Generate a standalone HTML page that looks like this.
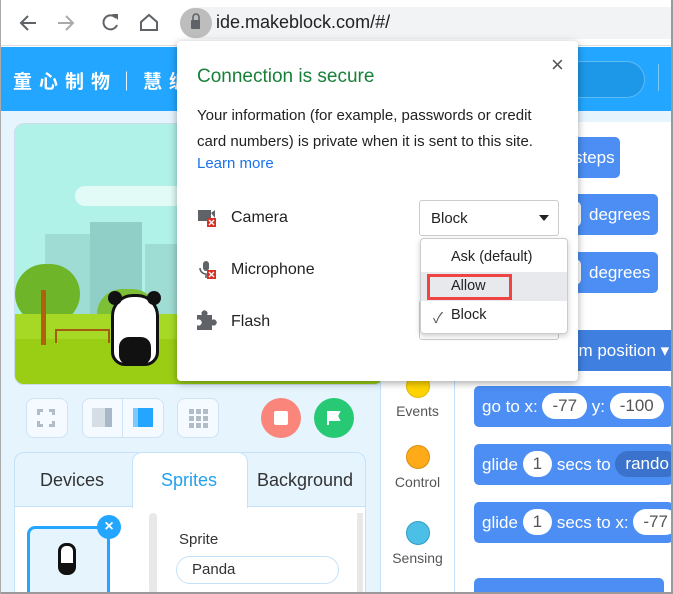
<!DOCTYPE html>
<html style="overflow:hidden;width:673px;height:594px"><head><meta charset="utf-8"><style>
*{margin:0;padding:0;box-sizing:border-box}
body{width:673px;height:594px;overflow:hidden;position:relative;background:#fff;font-family:"Liberation Sans","Noto Sans CJK SC",sans-serif;}
.a{position:absolute}
.blk{position:absolute;background:#4c8ef3;border-radius:5px;color:#fff;font-size:17px;height:41px;line-height:41px;padding-left:8px;white-space:nowrap;overflow:hidden}
.pill{display:inline-block;background:#fff;color:#555;border-radius:14px;height:26px;line-height:26px;padding:0 10px;vertical-align:middle;margin-top:-3px}
.cat{position:absolute;left:380px;width:75px;text-align:center;font-size:14px;color:#555}
.dot{width:24px;height:24px;border-radius:50%;margin:0 auto 5px}
</style></head><body>
<!-- toolbar -->
<div class="a" style="left:0;top:0;width:673px;height:46px;background:#fff;border-bottom:1px solid #ddd"></div>
<div class="a" style="left:180px;top:7px;width:493px;height:32px;background:#f1f3f4;border-radius:16px 0 0 16px"></div>
<div class="a" style="left:180px;top:8px;width:32px;height:30px;border-radius:15px;background:#bdbdbd"></div>
<svg class="a" style="left:0;top:0" width="200" height="46">
<g stroke="#5f6368" stroke-width="2" fill="none"><path d="M36 23H21M28 16l-7 7 7 7"/><path d="M58 23h15M66 16l7 7-7 7" stroke="#aaa"/><path d="M116 18a7 7 0 1 0 1 7"/><path d="M141 22l8-7 8 7v8h-16z"/></g>
<path d="M112 14h6v6z" fill="#5f6368"/>
<rect x="191" y="20" width="10" height="9" rx="1" fill="#5f6368"/><path d="M193 20v-3a3 3 0 0 1 6 0v3" stroke="#5f6368" stroke-width="1.6" fill="none"/>
</svg>
<div class="a" style="left:216px;top:12px;font-size:18px;color:#222">ide.makeblock.com/#/</div>
<!-- header -->
<div class="a" style="left:0;top:47px;width:673px;height:64px;background:#22a6ff"></div>
<div class="a" style="left:13px;top:67px;font-size:19px;color:#fff;letter-spacing:7px;font-weight:bold">童心制物｜慧编</div>
<div class="a" style="left:560px;top:61px;width:85px;height:37px;background:#1d97e8;border:1px solid #5cbcf5;border-left:none;border-radius:0 19px 19px 0"></div>
<div class="a" style="left:658px;top:64px;width:1px;height:27px;background:#7ccaf8"></div>
<!-- left panel -->
<div class="a" style="left:0;top:111px;width:380px;height:483px;background:#e6f4fe"></div>
<div class="a" style="left:380px;top:111px;width:293px;height:11px;background:#e6f4fe"></div>
<div class="a" style="left:14px;top:123px;width:370px;height:262px;border-radius:10px;background:#b0f2e8;overflow:hidden;border:1px solid #cde">
 <div class="a" style="left:60px;top:62px;width:110px;height:20px;border-radius:20px;background:#e2fbf7"></div>
 <div class="a" style="left:30px;top:110px;width:45px;height:100px;background:#9edcd4"></div>
 <div class="a" style="left:75px;top:98px;width:52px;height:120px;background:#8fcfc8"></div>
 <div class="a" style="left:130px;top:120px;width:45px;height:100px;background:#9edcd4"></div>
 <div class="a" style="left:0;top:140px;width:65px;height:60px;border-radius:30px;background:#6fb52a"></div>
 <div class="a" style="left:82px;top:165px;width:60px;height:50px;border-radius:30px;background:#7dc035"></div>
 <div class="a" style="left:0;top:190px;width:370px;height:72px;background:#a5d925"></div>
 <div class="a" style="left:0;top:215px;width:370px;height:47px;background:#9ace15"></div>
 <div class="a" style="left:26px;top:166px;width:5px;height:55px;background:#b06010"></div>
 <div class="a" style="left:40px;top:205px;width:55px;height:14px;border:2px solid #a65a10;border-bottom:none"></div>
 <div class="a" style="left:96px;top:170px;width:48px;height:72px;border-radius:22px 22px 14px 14px;background:#fff;border:3px solid #111"></div>
 <div class="a" style="left:93px;top:167px;width:14px;height:14px;border-radius:50%;background:#111"></div>
 <div class="a" style="left:132px;top:167px;width:14px;height:14px;border-radius:50%;background:#111"></div>
 <div class="a" style="left:104px;top:213px;width:32px;height:28px;border-radius:10px;background:#111"></div>
</div>
<!-- buttons row -->
<div class="a" style="left:26px;top:398px;width:42px;height:40px;border:1px solid #cfe3f5;border-radius:8px;background:#f4faff"></div>
<div class="a" style="left:37px;top:409px;width:18px;height:18px;border:3px dashed #b0bcc8"></div>
<div class="a" style="left:82px;top:398px;width:82px;height:40px;border:1px solid #cfe3f5;border-radius:8px;background:#f4faff"></div>
<div class="a" style="left:122px;top:398px;width:1px;height:40px;background:#cfe3f5"></div>
<div class="a" style="left:92px;top:408px;width:20px;height:19px;background:#d5dde5;border-right:7px solid #a9b8c6"></div>
<div class="a" style="left:133px;top:408px;width:20px;height:19px;background:#22a6ff;border-left:5px solid #7cc9ff"></div>
<div class="a" style="left:177px;top:398px;width:42px;height:40px;border:1px solid #cfe3f5;border-radius:8px;background:#f4faff"></div>
<div class="a" style="left:189px;top:409px;width:19px;height:19px;background:repeating-linear-gradient(90deg,#b0bcc8 0 5px,transparent 5px 7px),#fff;-webkit-mask:repeating-linear-gradient(0deg,#000 0 5px,transparent 5px 7px)"></div>
<div class="a" style="left:261px;top:398px;width:40px;height:40px;border-radius:50%;background:#fa867b"></div>
<div class="a" style="left:274px;top:411px;width:14px;height:14px;background:#fff;border-radius:2px"></div>
<div class="a" style="left:314px;top:398px;width:40px;height:40px;border-radius:50%;background:#27c974"></div>
<svg class="a" style="left:326px;top:410px" width="16" height="16"><path d="M2 1v14M2 2h11l-2 4 2 4H2" fill="#fff" stroke="#fff" stroke-width="2"/></svg>
<!-- tabs -->
<div class="a" style="left:14px;top:452px;width:352px;height:142px;border:1px solid #c5e2fa;border-radius:10px 10px 0 0;background:#e6f4fe"></div>
<div class="a" style="left:15px;top:507px;width:350px;height:87px;background:#fff"></div>
<div class="a" style="left:15px;top:506px;width:350px;height:1px;background:#c5e2fa"></div>
<div class="a" style="left:132px;top:452px;width:116px;height:56px;background:#fff;border:1px solid #c5e2fa;border-bottom:none;border-radius:10px 10px 0 0"></div>
<div class="a" style="left:40px;top:470px;font-size:18px;color:#333">Devices</div>
<div class="a" style="left:161px;top:470px;font-size:18px;color:#22a0f0">Sprites</div>
<div class="a" style="left:257px;top:470px;font-size:18px;color:#333">Background</div>
<div class="a" style="left:149px;top:513px;width:8px;height:81px;background:#e8e8e8;border-radius:4px"></div>
<div class="a" style="left:357px;top:513px;width:6px;height:81px;background:#e8e8e8"></div>
<div class="a" style="left:27px;top:526px;width:83px;height:80px;border:3px solid #22a6ff;border-radius:8px;background:#e6f4fe"></div>
<div class="a" style="left:97px;top:515px;width:24px;height:24px;border-radius:50%;background:#22a6ff;color:#fff;text-align:center;line-height:24px;font-size:16px;font-weight:bold">×</div>
<div class="a" style="left:58px;top:543px;width:18px;height:32px;border-radius:8px;background:#fff;border:3px solid #111;border-bottom-width:12px"></div>
<div class="a" style="left:179px;top:531px;font-size:15px;color:#333">Sprite</div>
<div class="a" style="left:176px;top:556px;width:163px;height:28px;border:1px solid #c5e2fa;border-radius:14px;padding-left:15px;line-height:26px;font-size:15px;color:#333">Panda</div>
<!-- categories -->
<div class="a" style="left:380px;top:122px;width:75px;height:472px;background:#fff;border-left:1px solid #c5e2fa;border-right:1px solid #c5e2fa"></div>
<div class="cat" style="top:374px"><div class="dot" style="background:#ffd500;border:1px solid #e0b800"></div>Events</div>
<div class="cat" style="top:445px"><div class="dot" style="background:#ffab19;border:1px solid #d88e10"></div>Control</div>
<div class="cat" style="top:521px"><div class="dot" style="background:#4cbfe6;border:1px solid #2e9ec5"></div>Sensing</div>
<!-- blocks -->
<div class="blk" style="left:474px;top:137px;width:146px;padding-left:100px">steps</div>
<div class="blk" style="left:474px;top:194px;width:184px;padding-left:95px"><span class="pill" style="padding:0 6px;margin-right:8px"></span>degrees</div>
<div class="blk" style="left:474px;top:252px;width:184px;padding-left:95px"><span class="pill" style="padding:0 6px;margin-right:8px"></span>degrees</div>
<div class="blk" style="left:474px;top:330px;width:199px;padding-left:95px;background:#3f7fe0;border-radius:5px 0 0 5px">om position ▾</div>
<div class="blk" style="left:474px;top:386px;width:199px">go to x: <span class="pill">-77</span> y: <span class="pill">-100</span></div>
<div class="blk" style="left:474px;top:444px;width:199px">glide <span class="pill">1</span> secs to <span class="pill" style="background:#3a72cc;color:#fff">rando</span></div>
<div class="blk" style="left:474px;top:502px;width:199px">glide <span class="pill">1</span> secs to x: <span class="pill">-77</span></div>
<div class="blk" style="left:474px;top:578px;width:190px"></div>
<div class="a" style="left:671px;top:0;width:2px;height:594px;background:#999"></div>
<div class="a" style="left:0;top:592px;width:673px;height:2px;background:#999"></div>
<div class="a" style="left:0;top:0;width:1px;height:594px;background:#aaa"></div>
<!-- popup -->
<div class="a" style="left:177px;top:41px;width:401px;height:340px;background:#fff;border-radius:4px;box-shadow:0 2px 8px rgba(0,0,0,.35)"></div>
<div class="a" style="left:551px;top:52px;font-size:22px;color:#555">×</div>
<div class="a" style="left:197px;top:66px;font-size:19px;color:#188038">Connection is secure</div>
<div class="a" style="left:197px;top:103px;font-size:15px;color:#222;line-height:26px;width:350px">Your information (for example, passwords or credit card numbers) is private when it is sent to this site.</div>
<div class="a" style="left:197px;top:155px;font-size:15px;color:#1a73e8">Learn more</div>
<svg class="a" style="left:196px;top:208px" width="24" height="130">
<rect x="2" y="2" width="13" height="11" fill="#5f6368"/><path d="M15 5l4-3v8z" fill="#5f6368"/><rect x="11" y="10" width="9" height="9" fill="#d93025"/><path d="M13 12l5 5M18 12l-5 5" stroke="#fff" stroke-width="1.3"/>
<rect x="7" y="53" width="6" height="10" rx="3" fill="#5f6368"/><path d="M4 60a6 6 0 0 0 6 6v4" stroke="#5f6368" stroke-width="1.6" fill="none"/><rect x="11" y="62" width="9" height="9" fill="#d93025"/><path d="M13 64l5 5M18 64l-5 5" stroke="#fff" stroke-width="1.3"/>
<path d="M1 107h5a3 3 0 1 1 5 0h5v5a3 3 0 1 1 0 5v5H1v-5a3 3 0 1 0 0-5z" fill="#5f6368"/>
</svg>
<div class="a" style="left:231px;top:209px;font-size:16px;color:#222">Camera</div>
<div class="a" style="left:231px;top:261px;font-size:16px;color:#222">Microphone</div>
<div class="a" style="left:231px;top:313px;font-size:16px;color:#222">Flash</div>
<div class="a" style="left:419px;top:200px;width:140px;height:36px;border:1px solid #ccc;border-radius:3px;font-size:15px;color:#222;padding:9px 11px">Block<span style="position:absolute;right:9px;top:14px;border:5px solid transparent;border-top:6px solid #222"></span></div>
<div class="a" style="left:419px;top:300px;width:140px;height:40px;border:1px solid #ccc;border-radius:3px"></div>
<div class="a" style="left:420px;top:238px;width:148px;height:96px;background:#fff;border:1px solid #ccc;border-radius:4px;box-shadow:0 2px 6px rgba(0,0,0,.2)"></div>
<div class="a" style="left:421px;top:272px;width:146px;height:29px;background:#e8e9ec"></div>
<div class="a" style="left:427px;top:274px;width:85px;height:26px;border:3px solid #ee4444"></div>
<div class="a" style="left:451px;top:249px;font-size:14.5px;color:#222">Ask (default)</div>
<div class="a" style="left:451px;top:278px;font-size:14.5px;color:#222">Allow</div>
<div class="a" style="left:433px;top:307px;font-size:14.5px;color:#555">✓</div>
<div class="a" style="left:451px;top:307px;font-size:14.5px;color:#222">Block</div>
</body></html>
